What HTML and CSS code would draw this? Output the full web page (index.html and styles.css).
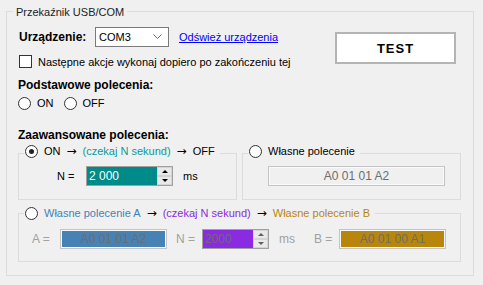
FILE: index.html
```html
<!DOCTYPE html>
<html lang="pl">
<head>
    <meta charset="UTF-8">
    <title>Przekaźnik USB/COM</title>
    <link rel="stylesheet" href="styles.css">
</head>
<body>

    <div class="panel">
        <div class="panel-title">Przekaźnik USB/COM</div>

        <div class="top">
            <div class="top-left">
                <div class="device-row">
                    <span class="device-label">Urządzenie:</span>
                    <div class="combo">
                        <span>COM3</span>
                        <svg width="9" height="6" viewBox="0 0 9 6"><polyline points="0.5,0.5 4.5,4.5 8.5,0.5" fill="none" stroke="#6e6e6e" stroke-width="1"/></svg>
                    </div>
                    <a class="refresh" href="#">Odśwież urządzenia</a>
                </div>
                <div class="check-row">
                    <span class="check"></span>
                    <span>Następne akcje wykonaj dopiero po zakończeniu tej</span>
                </div>
            </div>
            <div class="test-btn">TEST</div>
        </div>

        <div class="heading basic-heading">Podstawowe polecenia:</div>
        <div class="radio-row">
            <span class="radio"></span><span class="radio-text">ON</span>
            <span class="radio"></span><span class="radio-text">OFF</span>
        </div>

        <div class="heading adv-heading">Zaawansowane polecenia:</div>

        <div class="groups">
            <div class="group">
                <div class="group-title">
                    <span class="radio checked"></span>
                    <span>ON</span><span class="arrow">→</span>
                    <span class="teal">(czekaj N sekund)</span><span class="arrow">→</span>
                    <span>OFF</span>
                </div>
                <div class="n-row">
                    <span class="n-label">N =</span>
                    <div class="spin teal-spin">
                        <span class="spin-value">2 000</span>
                        <div class="spin-btns">
                            <span class="spin-up"><i class="tri-up"></i></span>
                            <span class="spin-down"><i class="tri-down"></i></span>
                        </div>
                    </div>
                    <span class="ms">ms</span>
                </div>
            </div>
            <div class="group">
                <div class="group-title">
                    <span class="radio"></span>
                    <span>Własne polecenie</span>
                </div>
                <div class="cmd-row">
                    <div class="cmd-box">A0 01 01 A2</div>
                </div>
            </div>
        </div>

        <div class="group wide">
            <div class="group-title wide-title">
                <span class="radio"></span>
                <span class="steel">Własne polecenie A</span><span class="arrow">→</span>
                <span class="violet">(czekaj N sekund)</span><span class="arrow">→</span>
                <span class="gold">Własne polecenie B</span>
            </div>
            <div class="ab-row">
                <span class="dim lbl-a">A =</span>
                <div class="hex-box steel-box">A0 01 01 A2</div>
                <span class="dim lbl-n">N =</span>
                <div class="spin violet-spin">
                    <span class="spin-value">2000</span>
                    <div class="spin-btns">
                        <span class="spin-up"><i class="tri-up dim-tri"></i></span>
                        <span class="spin-down"><i class="tri-down dim-tri"></i></span>
                    </div>
                </div>
                <span class="dim lbl-ms">ms</span>
                <span class="dim lbl-b">B =</span>
                <div class="hex-box gold-box">A0 01 00 A1</div>
            </div>
        </div>
    </div>

</body>
</html>
```

FILE: styles.css
```css
body {
    margin: 0;
    background: #f0f0f0;
    font-family: "Liberation Sans", Arial, sans-serif;
    font-size: 11px;
    color: #000;
}
.panel {
    box-sizing: border-box;
    margin: 11px 0 0 6px;
    width: 468px;
    height: 265px;
    border: 1px solid #dcdcdc;
}
.panel-title {
    width: fit-content;
    margin: -7px 0 0 6px;
    padding: 0 3px;
    line-height: 14px;
    background: #f0f0f0;
    color: #222;
}
.top {
    display: flex;
    margin-top: 8px;
    padding-left: 12px;
}
.device-row {
    display: flex;
    align-items: center;
    height: 20px;
}
.device-label {
    width: 76px;
    font-weight: bold;
    font-size: 12px;
}
.combo {
    box-sizing: border-box;
    width: 74px;
    height: 20px;
    border: 1px solid #7a7a7a;
    background: #fff;
    display: flex;
    align-items: center;
    justify-content: space-between;
    padding: 0 6px 0 3px;
}
.refresh {
    margin-left: 10px;
    color: #0000ff;
    text-decoration: underline;
}
.check-row {
    display: flex;
    align-items: center;
    gap: 6px;
    margin-top: 8px;
    height: 13px;
}
.check {
    box-sizing: border-box;
    width: 13px;
    height: 13px;
    border: 1px solid #333;
    background: #fff;
}
.test-btn {
    box-sizing: border-box;
    width: 121px;
    height: 32px;
    margin: 5px 17px 0 auto;
    border: 2px solid #b4b4b4;
    background: #fff;
    display: flex;
    align-items: center;
    justify-content: center;
    font-weight: bold;
    font-size: 13px;
    letter-spacing: 1px;
}
.heading {
    font-weight: bold;
    font-size: 12px;
    line-height: 14px;
    padding-left: 11px;
}
.basic-heading {
    margin-top: 10px;
}
.radio-row {
    display: flex;
    align-items: center;
    height: 14px;
    margin-top: 4px;
    padding-left: 11px;
}
.radio {
    box-sizing: border-box;
    flex: none;
    width: 13px;
    height: 13px;
    border: 1px solid #333;
    border-radius: 50%;
    background: #fff;
    display: flex;
    align-items: center;
    justify-content: center;
}
.radio.checked::after {
    content: "";
    width: 5px;
    height: 5px;
    border-radius: 50%;
    background: #222;
}
.radio-text {
    margin: 0 10px 0 6px;
}
.adv-heading {
    margin-top: 18px;
}
.groups {
    display: flex;
    gap: 5px;
    margin-top: 11px;
    padding-left: 11px;
}
.group {
    box-sizing: border-box;
    width: 219px;
    height: 47px;
    border: 1px solid #dcdcdc;
}
.group-title {
    display: flex;
    align-items: center;
    width: fit-content;
    height: 14px;
    margin: -10px 0 0 5px;
    padding: 0 5px 0 1px;
    background: #f0f0f0;
}
.group-title .radio {
    margin-right: 6px;
}
.arrow {
    margin: 0 6px;
    font-family: "DejaVu Sans", sans-serif;
    font-size: 12px;
}
.teal {
    color: #0a9a9a;
}
.n-row {
    display: flex;
    align-items: center;
    margin-top: 8px;
    padding-left: 38px;
}
.n-label {
    width: 29px;
}
.spin {
    box-sizing: border-box;
    display: flex;
    height: 20px;
    border: 1px solid #a0a0a0;
}
.teal-spin {
    width: 87px;
    background: #008b8b;
    color: #fff;
}
.spin-value {
    flex: 1;
    line-height: 18px;
    padding-left: 2px;
    font-size: 12px;
}
.spin-btns {
    width: 15px;
    display: flex;
    flex-direction: column;
    background: #f0f0f0;
}
.spin-up, .spin-down {
    flex: 1;
    display: flex;
    align-items: center;
    justify-content: center;
    border: 1px solid #d4d4d4;
    background: #e9e9e9;
}
.tri-up, .tri-down {
    width: 0;
    height: 0;
    border-left: 3px solid transparent;
    border-right: 3px solid transparent;
}
.tri-up {
    border-bottom: 3px solid #000;
}
.tri-down {
    border-top: 3px solid #000;
}
.tri-up.dim-tri {
    border-bottom-color: #606060;
}
.tri-down.dim-tri {
    border-top-color: #606060;
}
.ms {
    margin-left: 10px;
}
.cmd-row {
    margin-top: 8px;
    padding-left: 25px;
}
.cmd-box {
    box-sizing: border-box;
    width: 177px;
    height: 20px;
    border: 1px solid #c4c4c4;
    box-shadow: inset 0 0 0 1px #fafafa;
    text-align: center;
    line-height: 18px;
    font-size: 12px;
    color: #6d6d6d;
}
.wide {
    width: 443px;
    height: 49px;
    margin: 13px 0 0 11px;
}
.wide-title {
    margin-top: -8px;
}
.steel {
    color: #4682b4;
}
.violet {
    color: #8a2be2;
}
.gold {
    color: #b8860b;
}
.ab-row {
    display: flex;
    align-items: center;
    margin-top: 9px;
    padding-left: 13px;
}
.dim {
    color: #a0a0a0;
    font-size: 12px;
}
.lbl-a {
    width: 28px;
}
.lbl-n {
    width: 26px;
    margin-left: 9px;
}
.lbl-ms {
    width: 35px;
    margin-left: 10px;
}
.lbl-b {
    width: 25px;
}
.hex-box {
    box-sizing: border-box;
    width: 107px;
    height: 20px;
    border: 1px solid #c4c4c4;
    box-shadow: inset 0 0 0 1px #fafafa;
    text-align: center;
    line-height: 18px;
    font-size: 12px;
    color: #6d6d6d;
}
.steel-box {
    background: #4682b4;
}
.gold-box {
    background: #b8860b;
}
.violet-spin {
    width: 67px;
    background: #8a2be2;
    color: #6d6d6d;
}
```
